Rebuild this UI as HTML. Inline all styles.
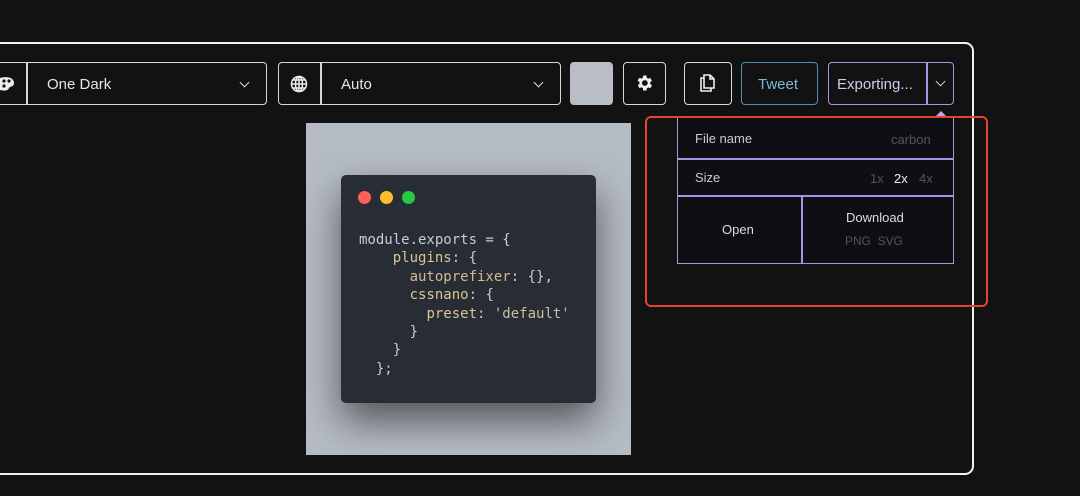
<!DOCTYPE html>
<html><head><style>
body{margin:0;width:1080px;height:496px;background:#121212;position:relative;overflow:hidden;font-family:"Liberation Sans",sans-serif;color:#e6e6e6}
.a{position:absolute;box-sizing:border-box}
.frame{left:-10px;top:42px;width:984px;height:433px;border:2.5px solid #f2f2f2;border-radius:9px}
.b{border:1.5px solid #d8d8d8;border-radius:4px}
.t{font-size:15px;position:absolute;top:13px}
.chev{position:absolute;width:6px;height:6px;border-right:1.5px solid #ddd;border-bottom:1.5px solid #ddd;transform:rotate(45deg)}
.code{font-family:"DejaVu Sans Mono","Liberation Mono",monospace;font-size:14px;line-height:18.4px;color:#c8ccd4;white-space:pre}
.p{border:1.5px solid #a696e4}
</style></head><body>
<div class="a frame"></div>

<div class="a b" style="left:-10px;top:62px;width:277px;height:43px"></div>
<div class="a" style="left:26px;top:62px;width:1.5px;height:43px;background:#d8d8d8"></div>
<svg class="a" style="left:0;top:75px" width="16" height="18" viewBox="0 0 16 18"><path d="M0 3 C6 1 14 2 14 8 C14 12 10 11 9 13 C8 16 4 16 0 15Z" fill="#eee"/><circle cx="4" cy="6" r="1.6" fill="#121212"/><circle cx="9" cy="6" r="1.6" fill="#121212"/><circle cx="4" cy="11" r="1.6" fill="#121212"/></svg>
<div class="t" style="left:47px;top:76px">One Dark</div>
<div class="chev" style="left:241px;top:79px"></div>

<div class="a b" style="left:278px;top:62px;width:283px;height:43px"></div>
<div class="a" style="left:320px;top:62px;width:1.5px;height:43px;background:#d8d8d8"></div>
<svg class="a" style="left:290px;top:75px" width="18" height="18" viewBox="0 0 18 18" fill="none" stroke="#eee" stroke-width="1.5"><circle cx="9" cy="9" r="7.5"/><ellipse cx="9" cy="9" rx="3.5" ry="7.5"/><path d="M1.5 9h15M3 5h12M3 13h12M9 1.5v15"/></svg>
<div class="t" style="left:341px;top:76px">Auto</div>
<div class="chev" style="left:535px;top:79px"></div>

<div class="a" style="left:570px;top:62px;width:43px;height:43px;background:#b9bec6;border-radius:4px"></div>
<div class="a b" style="left:623px;top:62px;width:43px;height:43px"></div>
<svg class="a" style="left:634px;top:73px" width="20" height="20" viewBox="0 0 24 24"><path fill="#eee" d="M19.4 13a7.5 7.5 0 000-2l2.1-1.6-2-3.5-2.5 1a7 7 0 00-1.7-1L15 3h-4l-.4 2.7a7 7 0 00-1.7 1l-2.5-1-2 3.5L6.6 11a7.5 7.5 0 000 2l-2.1 1.6 2 3.5 2.5-1a7 7 0 001.7 1L11 21h4l.4-2.7a7 7 0 001.7-1l2.5 1 2-3.5zM13 15.5a3.5 3.5 0 110-7 3.5 3.5 0 010 7z"/></svg>
<div class="a b" style="left:684px;top:62px;width:48px;height:43px"></div>
<svg class="a" style="left:699px;top:73px" width="17" height="20" viewBox="0 0 17 20" fill="none" stroke="#eee" stroke-width="1.6"><path d="M5 2h6l4 4v9H5z"/><path d="M11 2v4h4"/><path d="M5 5H2v13h10v-3"/></svg>
<div class="a" style="left:741px;top:62px;width:77px;height:43px;border:1.5px solid #4f8fb0;border-radius:4px"></div>
<div class="t" style="left:758px;top:76px;color:#7fb6d8">Tweet</div>
<div class="a p" style="left:828px;top:62px;width:126px;height:43px;border-radius:4px"></div>
<div class="a" style="left:926px;top:62px;width:1.5px;height:43px;background:#a696e4"></div>
<div class="t" style="left:837px;top:76px;color:#d0ccf0">Exporting...</div>
<div class="chev" style="left:937px;top:78px;border-color:#c8c0f0"></div>
<div class="a" style="left:936px;top:111px;width:0;height:0;border:5px solid transparent;border-bottom-color:#c9a4e8;border-top:0"></div>

<div class="a p" style="left:677px;top:117px;width:277px;height:147px;background:#0f0f13"></div>
<div class="a" style="left:677px;top:158px;width:277px;height:1.5px;background:#a696e4"></div>
<div class="a" style="left:677px;top:195px;width:277px;height:1.5px;background:#a696e4"></div>
<div class="a" style="left:801px;top:195px;width:1.5px;height:68px;background:#a696e4"></div>
<div class="a" style="left:695px;top:131px;font-size:13px;color:#c8c8dc">File name</div>
<div class="a" style="left:891px;top:132px;font-size:13px;color:#555">carbon</div>
<div class="a" style="left:695px;top:170px;font-size:13px;color:#c8c8dc">Size</div>
<div class="a" style="left:870px;top:171px;font-size:13px;color:#555">1x</div>
<div class="a" style="left:894px;top:171px;font-size:13px;color:#eee">2x</div>
<div class="a" style="left:919px;top:171px;font-size:13px;color:#555">4x</div>
<div class="a" style="left:722px;top:222px;font-size:13px;color:#ddd">Open</div>
<div class="a" style="left:846px;top:210px;font-size:13px;color:#ddd">Download</div>
<div class="a" style="left:845px;top:234px;font-size:12px;color:#555">PNG&nbsp;&nbsp;SVG</div>
<div class="a" style="left:645px;top:116px;width:343px;height:191px;border:2.5px solid #e0452e;border-radius:6px"></div>

<div class="a" style="left:306px;top:123px;width:325px;height:332px;background:#b6bcc4;overflow:hidden">
<div class="a" style="left:35px;top:52px;width:255px;height:228px;background:#282c34;border-radius:5px;box-shadow:0 18px 40px rgba(0,0,0,.55)">
<div class="a" style="left:17px;top:16px;width:13px;height:13px;border-radius:50%;background:#ff5f56"></div>
<div class="a" style="left:39px;top:16px;width:13px;height:13px;border-radius:50%;background:#ffbd2e"></div>
<div class="a" style="left:61px;top:16px;width:13px;height:13px;border-radius:50%;background:#27c93f"></div>
<div class="a code" style="left:18px;top:56px">module.exports = {
    <span style="color:#d8c890">plugins</span>: {
      <span style="color:#d8b890">autoprefixer</span>: {},
      <span style="color:#d8c890">cssnano</span>: {
        <span style="color:#d8c890">preset</span>: <span style="color:#c8c0a0">'default'</span>
      }
    }
  };</div>
</div></div>
</body></html>
